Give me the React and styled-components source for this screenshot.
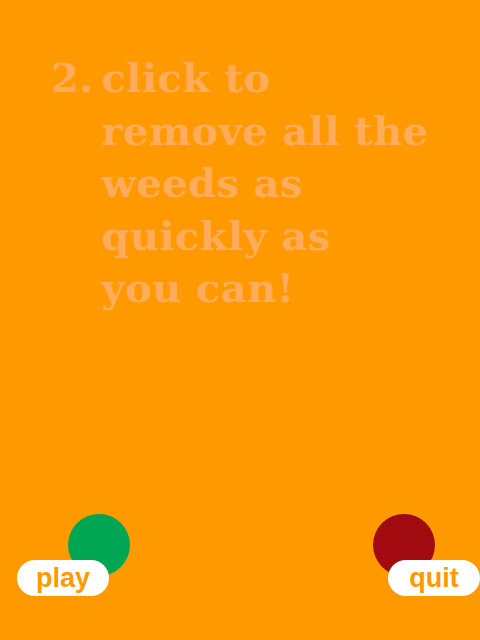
import React from "react";
import styled, { createGlobalStyle } from "styled-components";

const GlobalStyle = createGlobalStyle`
	html, body {
		margin: 0;
		padding: 0;
		background: #ff9900;
	}
`;

const Screen = styled.main`
	width: 480px;
	height: 640px;
	background: #ff9900;
	display: flex;
	flex-direction: column;
	justify-content: space-between;
	overflow: hidden;
`;

const Step = styled.section`
	display: flex;
	gap: 8px;
	padding: 52px 0 0 51px;
	font-family: "DejaVu Serif", "Liberation Serif", serif;
	font-weight: bold;
	font-size: 40px;
	line-height: 52.5px;
	letter-spacing: 0.4px;
	color: #ffad5c;
`;

const Number = styled.span`
	flex: none;
`;

const Instruction = styled.p`
	margin: 0;
	width: 340px;
`;

const Footer = styled.footer`
	display: flex;
	justify-content: space-between;
	align-items: flex-start;
	padding-bottom: 44px;
`;

const Control = styled.div`
	display: flex;
	flex-direction: column;
	align-items: ${(p) => (p.$side === "left" ? "flex-start" : "flex-end")};
	padding-left: ${(p) => (p.$side === "left" ? "17px" : "0")};
`;

const Dot = styled.div`
	width: 62px;
	height: 62px;
	border-radius: 50%;
	background: ${(p) => p.$color};
	margin-left: ${(p) => (p.$side === "left" ? "51px" : "0")};
	margin-right: ${(p) => (p.$side === "right" ? "45px" : "0")};
`;

const Pill = styled.button`
	margin-top: -16px;
	width: 92px;
	height: 36px;
	border: none;
	border-radius: 18px;
	background: #ffffff;
	color: #ff9900;
	font-family: "Liberation Sans", Arial, sans-serif;
	font-weight: bold;
	font-size: 27px;
	line-height: 36px;
	padding: 0;
	cursor: pointer;
	position: relative;
`;

const App = () => {
	return (
		<Screen>
			<GlobalStyle />
			<Step>
				<Number>2.</Number>
				<Instruction>
					click to<br />
					remove all the<br />
					weeds as<br />
					quickly as<br />
					you can!
				</Instruction>
			</Step>
			<Footer>
				<Control $side="left">
					<Dot $color="#00a651" $side="left" />
					<Pill>play</Pill>
				</Control>
				<Control $side="right">
					<Dot $color="#a10b10" $side="right" />
					<Pill>quit</Pill>
				</Control>
			</Footer>
		</Screen>
	);
};

export default App;
